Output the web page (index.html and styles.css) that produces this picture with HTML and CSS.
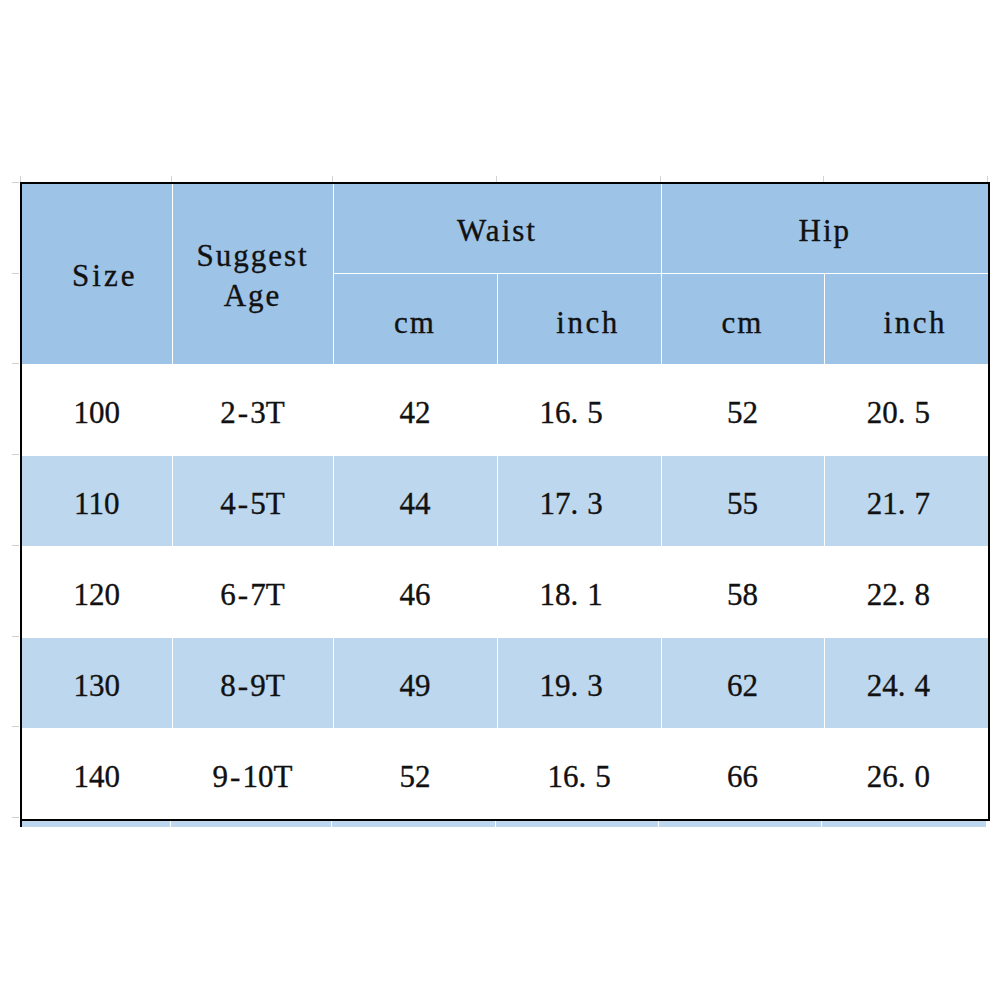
FILE: index.html
```html
<!DOCTYPE html>
<html>
<head>
<meta charset="utf-8">
<link rel="stylesheet" href="styles.css">
</head>
<body>
<div class="page">
  <div class="corner"></div>
  <div class="top-ticks">
    <div class="tt w1"></div><div class="tt w2"></div><div class="tt w3"></div><div class="tt w4"></div><div class="tt w5"></div><div class="tt w6"></div>
  </div>
  <div class="left-ticks">
    <div class="lt"></div><div class="lt"></div><div class="lt"></div><div class="lt"></div><div class="lt"></div><div class="lt"></div><div class="lt"></div><div class="lt last"></div>
  </div>
  <div class="sheet">
    <table class="size-table">
      <colgroup>
        <col class="c1"><col class="c2"><col class="c3"><col class="c4"><col class="c5"><col class="c6">
      </colgroup>
      <thead>
        <tr class="h1">
          <th rowspan="2" class="size-h">Size</th>
          <th rowspan="2" class="age-h">Suggest<br>Age</th>
          <th colspan="2">Waist</th>
          <th colspan="2">Hip</th>
        </tr>
        <tr class="h2">
          <th>cm</th>
          <th class="inch-h">inch</th>
          <th>cm</th>
          <th class="inch-h">inch</th>
        </tr>
      </thead>
      <tbody>
        <tr class="odd"><td>100</td><td>2<span class="dash">-</span>3T</td><td>42</td><td class="dec">16<span class="dot">.</span>5</td><td>52</td><td class="dec">20<span class="dot">.</span>5</td></tr>
        <tr class="even"><td>110</td><td>4<span class="dash">-</span>5T</td><td>44</td><td class="dec">17<span class="dot">.</span>3</td><td>55</td><td class="dec">21<span class="dot">.</span>7</td></tr>
        <tr class="odd"><td>120</td><td>6<span class="dash">-</span>7T</td><td>46</td><td class="dec">18<span class="dot">.</span>1</td><td>58</td><td class="dec">22<span class="dot">.</span>8</td></tr>
        <tr class="even"><td>130</td><td>8<span class="dash">-</span>9T</td><td>49</td><td class="dec">19<span class="dot">.</span>3</td><td>62</td><td class="dec">24<span class="dot">.</span>4</td></tr>
        <tr class="odd"><td>140</td><td>9<span class="dash">-</span>10T</td><td>52</td><td class="dec-c">16<span class="dot">.</span>5</td><td>66</td><td class="dec">26<span class="dot">.</span>0</td></tr>
      </tbody>
    </table>
    <div class="strip">
      <div class="sc w1"></div><div class="sc w2"></div><div class="sc w3"></div><div class="sc w4"></div><div class="sc w5"></div><div class="sc w6"></div>
    </div>
  </div>
</div>
</body>
</html>
```

FILE: styles.css
```css
html, body {
  margin: 0;
  padding: 0;
  background: #ffffff;
}

body {
  width: 1001px;
  height: 1001px;
  overflow: hidden;
  font-family: "Liberation Serif", "Times New Roman", serif;
  color: #111;
}

.page {
  padding-top: 176px;
  display: grid;
  grid-template-columns: 20px 968px;
  grid-template-rows: 6px auto;
}

.top-ticks {
  display: flex;
  height: 6px;
}

.tt {
  border-left: 1px solid #d4d4d4;
  box-sizing: border-box;
}

.w1 { width: 151px; }
.w2 { width: 161px; }
.w3 { width: 164px; }
.w4 { width: 164px; }
.w5 { width: 163px; }
.w6 { width: 165px; }

.top-ticks .w6 {
  border-right: 1px solid #d4d4d4;
}

.left-ticks {
  display: flex;
  flex-direction: column;
  padding-left: 12px;
}

.lt {
  height: 90.8px;
  width: 7px;
  border-top: 1px solid #d0d0d0;
  box-sizing: border-box;
  flex: none;
}

.lt:first-child {
  height: 90.5px;
}

.sheet {
  width: 968px;
}

.size-table {
  width: 968px;
  border-collapse: collapse;
  table-layout: fixed;
  border: 2px solid #000;
}

.c1 { width: 151px; }
.c2 { width: 161px; }
.c3 { width: 164px; }
.c4 { width: 164px; }
.c5 { width: 163px; }
.c6 { width: 165px; }

.size-table th,
.size-table td {
  border: 1px solid #ffffff;
  padding: 0;
  text-align: center;
  vertical-align: middle;
  font-size: 31px;
  font-weight: normal;
  line-height: 40px;
  -webkit-text-stroke: 0.35px #111;
}

.size-table th {
  background: #9dc3e6;
  letter-spacing: 2px;
}

.size-table tr.h1 th {
  height: 85px;
  padding-top: 4px;
}

.size-table tr.h2 th {
  height: 82px;
  padding-top: 8px;
}

.size-table th.size-h {
  padding-left: 16px;
  padding-top: 6px;
  letter-spacing: 3px;
}

.size-table th.age-h {
  padding-top: 4px;
}

.size-table th.inch-h {
  padding-left: 18px;
  letter-spacing: 2.5px;
}

.size-table td {
  height: 84px;
  padding-top: 6px;
}

.size-table tr.odd td { background: #ffffff; }
.size-table tr.even td { background: #bdd7ee; }

.size-table td.dec {
  padding-right: 16px;
}

.dot {
  padding-right: 9px;
}

.dash {
  padding: 0 2px;
}

.strip {
  display: flex;
  height: 6px;
  border-left: 2px solid #000;
  box-sizing: border-box;
  width: 967px;
}

.sc {
  background: #bdd7ee;
  border-right: 1px solid #ffffff;
  box-sizing: border-box;
  height: 6px;
}

.strip .w1 { width: 149px; }
```
